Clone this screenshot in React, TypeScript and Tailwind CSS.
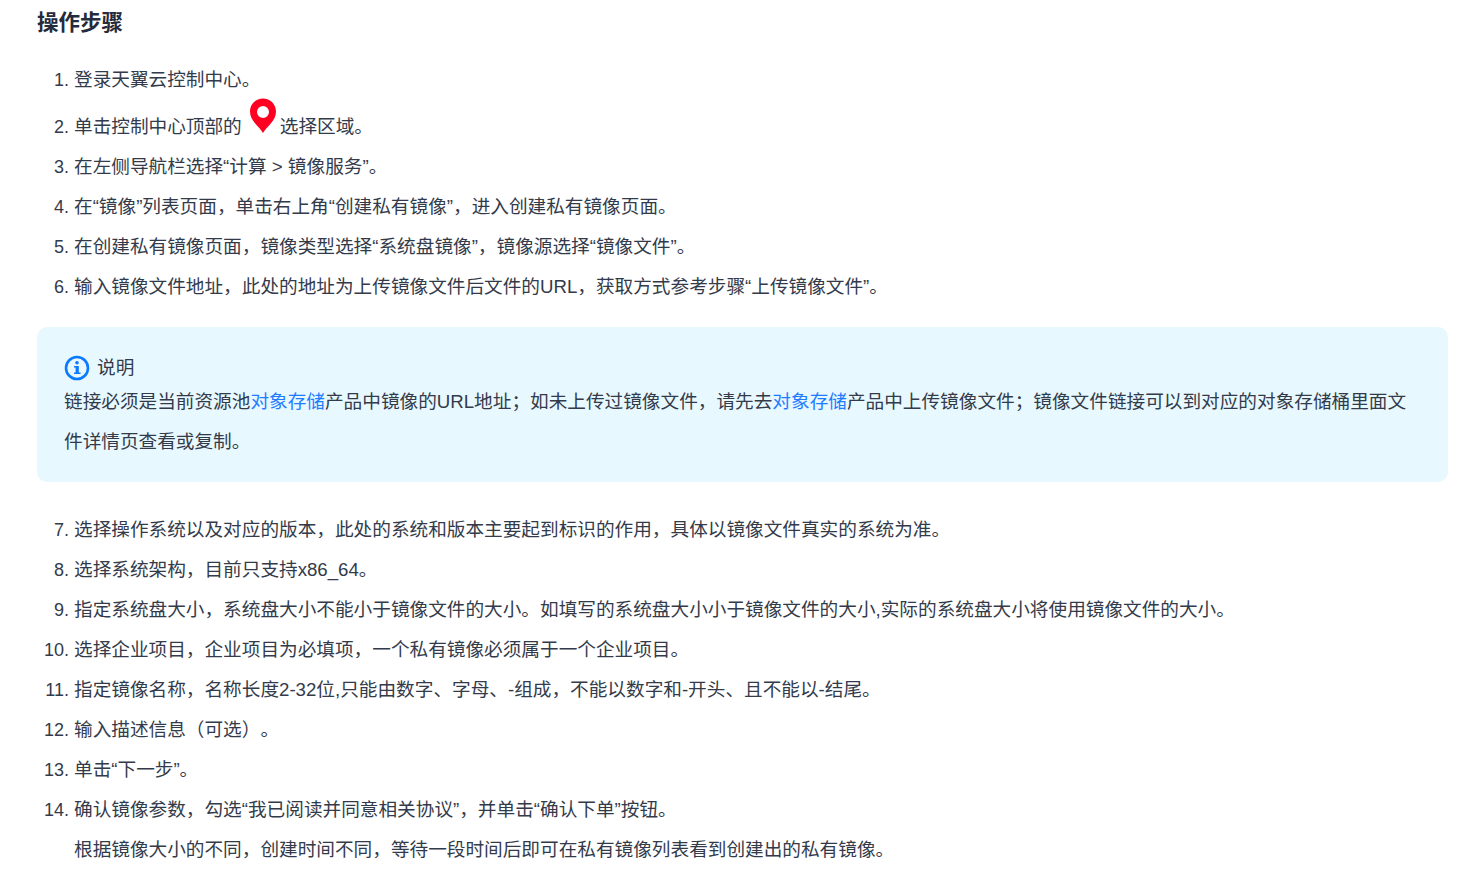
import React from "react";

const first = [
  "登录天翼云控制中心。",
  "PIN",
  "在左侧导航栏选择“计算 > 镜像服务”。",
  "在“镜像”列表页面，单击右上角“创建私有镜像”，进入创建私有镜像页面。",
  "在创建私有镜像页面，镜像类型选择“系统盘镜像”，镜像源选择“镜像文件”。",
  "输入镜像文件地址，此处的地址为上传镜像文件后文件的URL，获取方式参考步骤“上传镜像文件”。",
];

const second = [
  "选择操作系统以及对应的版本，此处的系统和版本主要起到标识的作用，具体以镜像文件真实的系统为准。",
  "选择系统架构，目前只支持x86_64。",
  "指定系统盘大小，系统盘大小不能小于镜像文件的大小。如填写的系统盘大小小于镜像文件的大小,实际的系统盘大小将使用镜像文件的大小。",
  "选择企业项目，企业项目为必填项，一个私有镜像必须属于一个企业项目。",
  "指定镜像名称，名称长度2-32位,只能由数字、字母、-组成，不能以数字和-开头、且不能以-结尾。",
  "输入描述信息（可选）。",
  "单击“下一步”。",
  "确认镜像参数，勾选“我已阅读并同意相关协议”，并单击“确认下单”按钮。",
];

const PinIcon = () => (
  <span className="-mt-[2px] ml-[4px] inline-block h-[35px] w-[34px] bg-white">
    <svg viewBox="0 0 34 35" className="block h-[35px] w-[34px]">
      <path
        fill="#ff0022"
        fillRule="evenodd"
        d="M17 0.500C9.700 0.500 4 6.300 4 13.500 4 18 6 21.500 9 25.200 11.800 28.600 15 31.500 17 35c2-3.500 5.200-6.400 8-9.800 3-3.700 5-7.200 5-11.700C30 6.300 24.300 0.500 17 0.500zm0 7.500a6 6 0 1 1 0 12 6 6 0 0 1 0-12z"
      />
    </svg>
  </span>
);

const Row = ({ n, children }: { n: number; children: React.ReactNode }) => (
  <li className="flex items-baseline">
    <span className="w-[37px] pr-[5px] text-right text-[18px]">{n}.</span>
    <span className="whitespace-nowrap">{children}</span>
  </li>
);

export default function App() {
  return (
    <div className="h-[869px] overflow-hidden bg-white pl-[37px] pr-[19px] text-[18.65px] leading-[40px] text-[#333b4b] [font-family:'Liberation_Sans','Noto_Sans_CJK_SC',sans-serif] [text-spacing-trim:space-all]">
      <h2 className="flex h-[45px] items-center text-[21.5px] font-bold text-[#252b3a]">操作步骤</h2>
      <ol className="mt-[15px]">
        {first.map((text, i) => (
          <Row key={i} n={i + 1}>
            {text === "PIN" ? (
              <>
                单击控制中心顶部的
                <PinIcon />
                选择区域。
              </>
            ) : (
              text
            )}
          </Row>
        ))}
      </ol>
      <div className="mt-[20px] h-[155px] rounded-[10px] bg-[#e8f8ff] pl-[27px] pr-[30px] pt-[26px]">
        <div className="flex h-[29px] items-center gap-[7px]">
          <svg viewBox="0 0 26 26" className="h-[26px] w-[26px]">
            <circle cx="13" cy="13" r="11" fill="none" stroke="#0a7aff" strokeWidth="2.600" />
            <circle cx="13" cy="7.800" r="1.800" fill="#0a7aff" />
            <path fill="#0a7aff" d="M10 11h4.800v6.400H16.500V19h-6.500v-1.600h1.600v-4.800H10z" />
          </svg>
          <span>说明</span>
        </div>
        <p>
          链接必须是当前资源池<span className="text-[#1f7cff]">对象存储</span>产品中镜像的URL地址；如未上传过镜像文件，请先去
          <span className="text-[#1f7cff]">对象存储</span>产品中上传镜像文件；镜像文件链接可以到对应的对象存储桶里面文件详情页查看或复制。
        </p>
      </div>
      <ol className="mt-[28px]">
        {second.map((text, i) => (
          <Row key={i} n={i + 7}>
            {text}
          </Row>
        ))}
        <li className="pl-[37px]">根据镜像大小的不同，创建时间不同，等待一段时间后即可在私有镜像列表看到创建出的私有镜像。</li>
      </ol>
    </div>
  );
}
